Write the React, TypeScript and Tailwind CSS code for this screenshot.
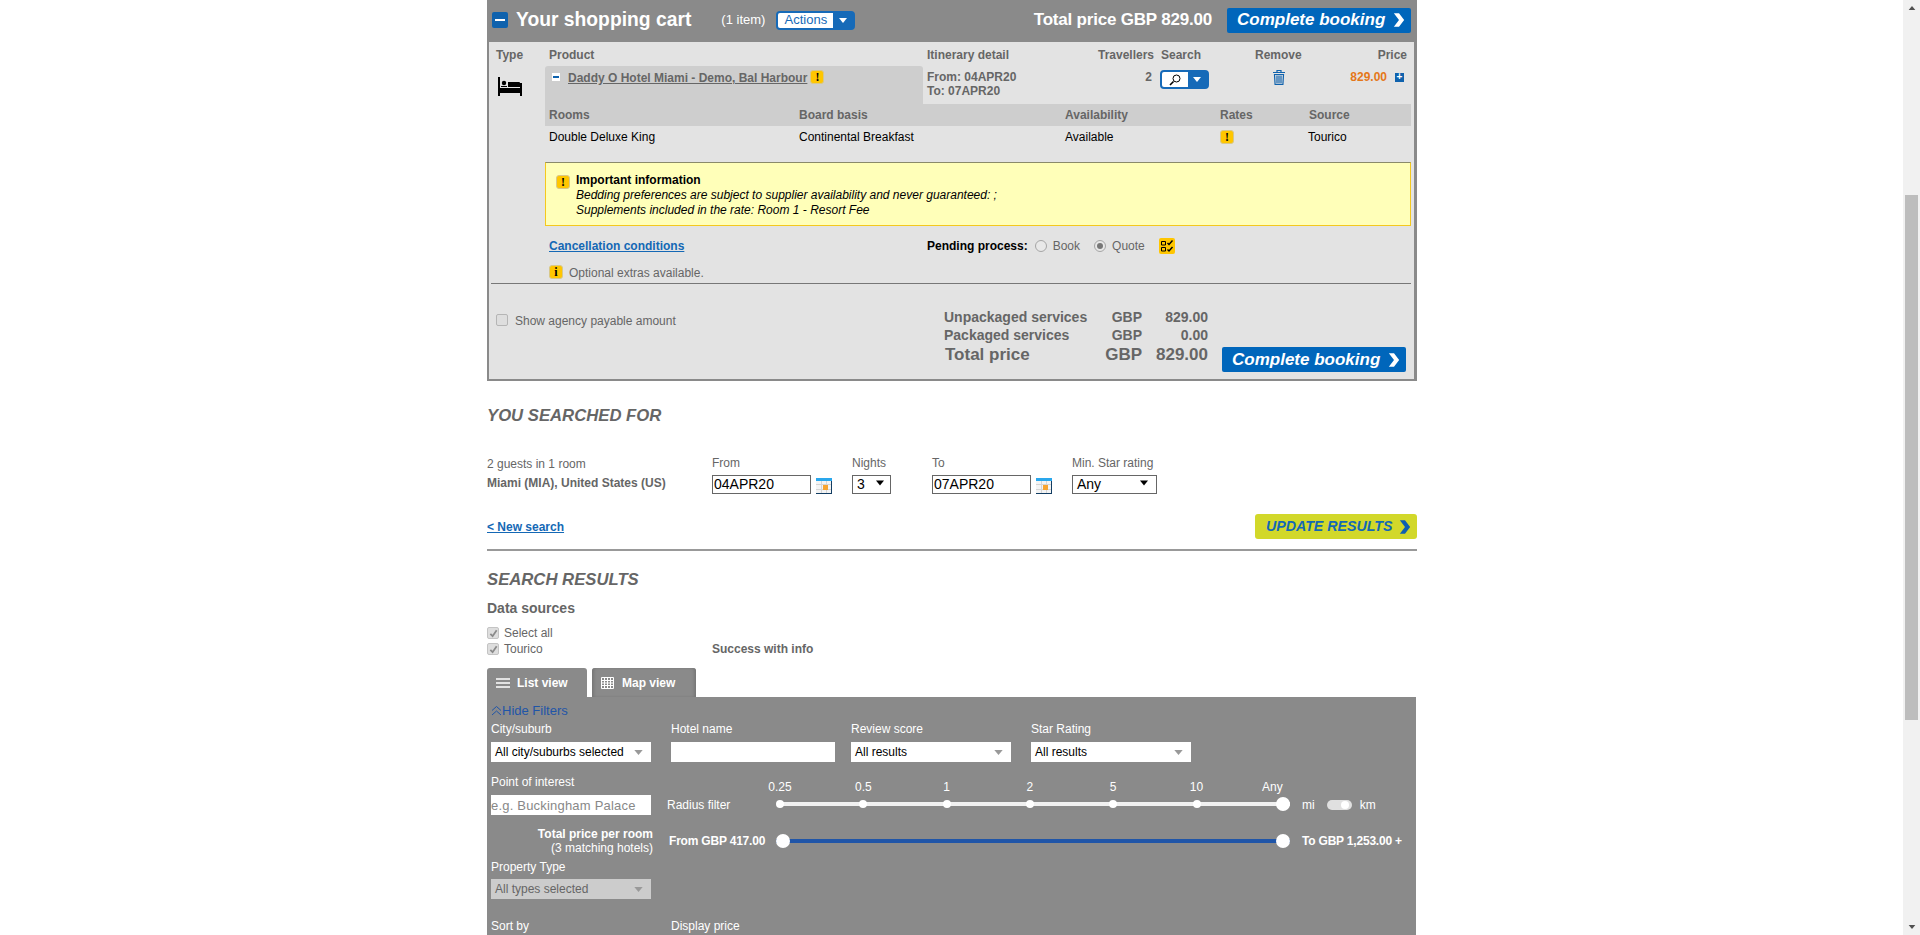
const font = "font-['Liberation_Sans',Arial,sans-serif]";

const Warn = ({ mark = "!" }: { mark?: string }) => (
  <span className="flex h-[14px] w-[14px] shrink-0 items-center justify-center rounded-[3px] border border-[#d8c88a] bg-[#ffc600] font-['Liberation_Serif',serif] text-[12px] font-bold leading-none text-black">
    {mark}
  </span>
);

const Arrow = ({ className }: { className: string }) => (
  <svg viewBox="0 0 14 16" className={className} fill="currentColor">
    <path d="M1 0h6l6 8-6 8H1l6-8z" />
  </svg>
);

const Caret = ({ className }: { className: string }) => (
  <svg viewBox="0 0 10 6" className={className} fill="currentColor">
    <path d="M0 0h10L5 6z" />
  </svg>
);

const CompleteButton = () => (
  <button className="flex h-[25px] w-[184px] items-center justify-between rounded-[2px] bg-[#0066bb] pl-[10px] pr-[6px] text-[17px] font-bold italic text-white">
    Complete booking
    <Arrow className="h-[14px] w-[12px]" />
  </button>
);

const Bed = () => (
  <svg viewBox="0 0 24 19" className="h-[19px] w-[24px]" fill="black">
    <path d="M0 0h2v11h20V6h2v13h-2v-3H2v3H0z" />
    <circle cx="6" cy="6" r="2.2" />
    <path d="M3 9h6v1H3zM10 5h11a1 1 0 0 1 1 1v4H10z" />
  </svg>
);

const Trash = () => (
  <svg viewBox="0 0 12 15" className="h-[15px] w-[12px]" fill="none" stroke="#0f62ad" strokeWidth="1.2">
    <path d="M0 2.5h12M4 2.5V.5h4v2" />
    <path d="M1.5 4.5h9l-.6 10H2.1zM4 5.5v8M6 5.5v8M8 5.5v8" />
  </svg>
);

const Magnifier = () => (
  <svg viewBox="0 0 12 12" className="h-[12px] w-[12px]" fill="none" stroke="black">
    <circle cx="7.5" cy="4.5" r="3.5" />
    <path d="M4.5 7.5L1 11" strokeWidth="1.6" />
  </svg>
);

const ChecklistIcon = () => (
  <svg viewBox="0 0 16 16" className="h-[16px] w-[16px]">
    <rect width="16" height="16" rx="2" fill="#ffc600" />
    <path d="M2.5 3.5h4v3.5h-4zM2.5 9.5h4V13h-4z" fill="none" stroke="black" />
    <path d="M8.5 5l1.5 1.5L13.5 2.5M8.5 11.5L10 13l3.5-4" fill="none" stroke="black" strokeWidth="1.4" />
  </svg>
);

const Calendar = () => (
  <svg viewBox="0 0 16 16" className="h-[16px] w-[16px] shrink-0">
    <rect width="16" height="16" fill="#f4f4f4" />
    <path d="M0 6.5h16M0 11.5h16M5.5 3v13M10.5 3v13" stroke="#d5d5d5" />
    <rect width="16" height="3" fill="#2aa7ec" />
    <rect x="7" y="7" width="5" height="5" fill="#f7a531" />
    <path d="M0 15.5h16M15.5 3v13" stroke="#123d63" />
  </svg>
);

const Check = () => (
  <span className="flex h-[12px] w-[12px] items-center justify-center rounded-[2px] border border-[#c4c4c4] bg-[#dedede]">
    <svg viewBox="0 0 10 10" className="h-[9px] w-[9px]" fill="none" stroke="#8a8a8a" strokeWidth="2">
      <path d="M1.5 5.5l2.5 2.5 4.5-6.5" />
    </svg>
  </span>
);

const Radio = ({ checked = false }: { checked?: boolean }) => (
  <span className="flex h-[12px] w-[12px] items-center justify-center rounded-full border border-[#a5a5a5] bg-[#e8e8e8]">
    {checked && <span className="h-[6px] w-[6px] rounded-full bg-[#777]" />}
  </span>
);

const BoxSelect = ({ value, width, className }: { value: string; width: string; className: string }) => (
  <div className={`flex h-[19px] items-center justify-between border border-[#666] bg-white text-[14px] text-black ${width} ${className}`}>
    {value}
    <Caret className="mb-[3px] h-[6px] w-[8px]" />
  </div>
);

const FilterSelect = ({ value, disabled = false }: { value: string; disabled?: boolean }) => (
  <div className={`flex h-[20px] w-[160px] items-center justify-between pl-[4px] pr-[8px] text-[12px] ${disabled ? "bg-[#cccccc] text-[#666]" : "bg-white text-black"}`}>
    {value}
    <Caret className="h-[5px] w-[9px] text-[#999]" />
  </div>
);

const ShoppingCart = () => (
  <section className="border-b-2 border-l-2 border-r-3 border-[#8a8a8a] bg-[#e3e3e3] text-[12px] text-[#666]">
    <header className="-ml-[2px] -mr-[3px] flex h-[42px] items-center bg-[#8a8a8a] pb-[2px] pl-[5px] pr-[6px] text-white">
      <span className="flex h-[16px] w-[16px] items-center justify-center rounded-[2px] bg-[#0f62ad]">
        <span className="h-[2px] w-[10px] bg-white" />
      </span>
      <h1 className="ml-[8px] text-[19.3px] font-bold">Your shopping cart</h1>
      <span className="ml-[30px] text-[13px]">(1 item)</span>
      <span className="ml-[11px] flex h-[19px] w-[79px] items-center rounded-[4px] border-2 border-[#166ab8] bg-[#166ab8] text-[13px]">
        <span className="flex h-full w-[55px] items-center justify-center rounded-l-[2px] bg-white text-[#166ab8]">Actions</span>
        <Caret className="ml-[6px] h-[5px] w-[8px]" />
      </span>
      <strong className="ml-auto mr-[15px] text-[17px] tracking-[-0.2px]">Total price GBP 829.00</strong>
      <CompleteButton />
    </header>

    <div className="flex">
      <div className="w-[56px] shrink-0 pl-[7px]">
        <div className="flex h-[24px] items-center pt-[2px] font-bold">Type</div>
        <div className="ml-[2px] mt-[11px]"><Bed /></div>
      </div>

      <div className="w-[866px]">
        <div className="flex h-[24px] items-center pt-[2px] font-bold">
          <span className="w-[378px] pl-[4px]">Product</span>
          <span className="w-[175px] pl-[4px]">Itinerary detail</span>
          <span className="w-[56px] pr-[2px] text-right">Travellers</span>
          <span className="w-[90px] pl-[7px]">Search</span>
          <span className="w-[70px] pl-[11px]">Remove</span>
          <span className="w-[97px] pr-[4px] text-right">Price</span>
        </div>

        <div className="flex h-[38px] items-start font-bold">
          <div className="flex h-full w-[378px] items-start rounded-t-[3px] bg-[#cecece] pl-[7px] pt-[3px]">
            <span className="mt-[4px] flex h-[8px] w-[8px] items-center justify-center bg-white">
              <span className="h-[2px] w-[6px] bg-[#0f62ad]" />
            </span>
            <a className="ml-[8px] text-[12px] underline">Daddy O Hotel Miami - Demo, Bal Harbour </a>
            <span className="ml-[3px] mt-px"><Warn /></span>
          </div>
          <div className="w-[175px] pl-[4px] pt-[4px] leading-[14px]">
            <div>From: 04APR20</div>
            <div>To: 07APR20</div>
          </div>
          <div className="w-[56px] pr-[2px] pt-[4px] text-right leading-[14px]">2</div>
          <div className="w-[90px] pl-[6px] pt-[4px]">
            <div className="flex h-[19px] w-[49px] items-center rounded-[4px] border-2 border-[#166ab8] bg-[#166ab8] text-white">
              <span className="flex h-full w-[26px] items-center justify-center rounded-l-[2px] bg-white"><Magnifier /></span>
              <Caret className="ml-[5px] h-[5px] w-[8px]" />
            </div>
          </div>
          <div className="w-[70px] pl-[29px] pt-[4px]"><Trash /></div>
          <div className="flex w-[97px] items-center justify-end pr-[7px] pt-[4px] leading-[14px]">
            <span className="text-[#e57719]">829.00</span>
            <span className="ml-[8px] flex h-[9px] w-[9px] items-center justify-center bg-[#0f62ad] text-[10px] leading-none text-white">+</span>
          </div>
        </div>

        <div className="flex h-[22px] items-center bg-[#cecece] font-bold">
          <span className="w-[250px] pl-[4px]">Rooms</span>
          <span className="w-[266px] pl-[4px]">Board basis</span>
          <span className="w-[155px] pl-[4px]">Availability</span>
          <span className="w-[89px] pl-[4px]">Rates</span>
          <span className="pl-[4px]">Source</span>
        </div>
        <div className="flex h-[22px] items-center text-black">
          <span className="w-[250px] pl-[4px]">Double Deluxe King</span>
          <span className="w-[266px] pl-[4px]">Continental Breakfast</span>
          <span className="w-[155px] pl-[4px]">Available</span>
          <span className="w-[89px] pl-[4px]"><Warn /></span>
          <span className="pl-[3px]">Tourico</span>
        </div>

        <div className="mt-[14px] flex h-[64px] border border-[#f4c81e] border-t-[#8a8a6a] bg-[#ffffb9] pl-[10px] pt-[10px] text-black">
          <div className="mt-[2px]"><Warn /></div>
          <div className="ml-[6px] leading-[15px]">
            <div className="font-bold">Important information</div>
            <div className="italic">Bedding preferences are subject to supplier availability and never guaranteed: ;</div>
            <div className="italic">Supplements included in the rate: Room 1 - Resort Fee</div>
          </div>
        </div>

        <div className="flex h-[39px] items-center">
          <a className="w-[382px] pl-[4px] font-bold text-[#1468b5] underline">Cancellation conditions</a>
          <span className="font-bold text-black">Pending process:</span>
          <span className="ml-[7px] flex items-center gap-[6px]"><Radio />Book</span>
          <span className="ml-[14px] flex items-center gap-[6px]"><Radio checked />Quote</span>
          <span className="ml-[14px]"><ChecklistIcon /></span>
        </div>
        <div className="flex h-[18px] items-start pl-[4px]">
          <Warn mark="i" />
          <span className="ml-[6px] -mt-px">Optional extras available.</span>
        </div>
      </div>
    </div>

    <div className="ml-[2px] mr-[3px] h-px bg-[#777]" />

    <div className="flex h-[95px]">
      <label className="flex w-[455px] items-start gap-[7px] pl-[7px] pt-[30px]">
        <span className="h-[12px] w-[12px] rounded-[2px] border border-[#b5b5b5] bg-[#dedede]" />
        <span className="-mt-[2px]">Show agency payable amount</span>
      </label>
      <div className="w-[265px] pt-[24px] font-bold">
        <div className="flex h-[18px] items-center text-[14px]">
          <span className="w-[160px]">Unpackaged services</span>
          <span className="w-[38px] text-right">GBP</span>
          <span className="w-[66px] text-right">829.00</span>
        </div>
        <div className="flex h-[18px] items-center text-[14px]">
          <span className="w-[160px]">Packaged services</span>
          <span className="w-[38px] text-right">GBP</span>
          <span className="w-[66px] text-right">0.00</span>
        </div>
        <div className="flex h-[21px] items-center text-[17px]">
          <span className="w-[160px] pl-px">Total price</span>
          <span className="w-[38px] text-right">GBP</span>
          <span className="w-[66px] text-right">829.00</span>
        </div>
      </div>
      <div className="pl-[13px] pt-[63px]">
        <CompleteButton />
      </div>
    </div>
  </section>
);

const SearchSummary = () => (
  <section className="text-[12px] text-[#666]">
    <h2 className="mt-px flex h-[68px] items-center text-[16.7px] font-bold italic">YOU SEARCHED FOR</h2>
    <div className="flex h-[47px]">
      <div className="w-[225px] pt-[5px] leading-[19px]">
        <div>2 guests in 1 room</div>
        <div className="font-bold">Miami (MIA), United States (US)</div>
      </div>
      <div className="w-[140px]">
        <div className="h-[19px] pt-[6px] leading-[14px]">From</div>
        <div className="mt-[6px] flex items-start gap-[5px]">
          <input readOnly value="04APR20" className="h-[19px] w-[99px] border border-[#666] bg-white pl-px text-[14px] text-black" />
          <div className="mt-[3px]"><Calendar /></div>
        </div>
      </div>
      <div className="w-[80px]">
        <div className="h-[19px] pt-[6px] leading-[14px]">Nights</div>
        <BoxSelect value="3" width="w-[39px]" className="mt-[6px] pl-[4px] pr-[6px]" />
      </div>
      <div className="w-[140px]">
        <div className="h-[19px] pt-[6px] leading-[14px]">To</div>
        <div className="mt-[6px] flex items-start gap-[5px]">
          <input readOnly value="07APR20" className="h-[19px] w-[99px] border border-[#666] bg-white pl-px text-[14px] text-black" />
          <div className="mt-[3px]"><Calendar /></div>
        </div>
      </div>
      <div>
        <div className="h-[19px] pt-[6px] leading-[14px]">Min. Star rating</div>
        <BoxSelect value="Any" width="w-[85px]" className="mt-[6px] pl-[4px] pr-[8px]" />
      </div>
    </div>

    <div className="mt-[17px] flex h-[25px] items-center justify-between">
      <a className="font-bold text-[#1468b5] underline">&lt; New search</a>
      <button className="flex h-[25px] w-[162px] items-center justify-between rounded-[3px] bg-[#d2d82a] pl-[11px] pr-[6px] text-[14.2px] font-bold italic text-[#1468b5]">
        UPDATE RESULTS
        <Arrow className="h-[14px] w-[12px] text-[#0d5eb0]" />
      </button>
    </div>
    <div className="mt-[10px] h-[2px] bg-[#999]" />

    <h2 className="flex h-[57px] items-center text-[16.7px] font-bold italic">SEARCH RESULTS</h2>
    <h3 className="flex h-0 items-center text-[14px] font-bold">Data sources</h3>
    <div className="mt-[17px] flex h-[16px] items-center gap-[5px]"><Check />Select all</div>
    <div className="flex h-[16px] items-center">
      <span className="flex w-[225px] items-center gap-[5px]"><Check />Tourico</span>
      <span className="font-bold">Success with info</span>
    </div>
  </section>
);

const Tabs = () => (
  <div className="mt-[11px] flex h-[29px] items-end gap-[5px] text-[12px] font-bold text-white">
    <div className="flex h-[29px] w-[100px] items-center rounded-t-[3px] bg-[#8a8a8a] pl-[9px]">
      <svg viewBox="0 0 14 10" className="h-[10px] w-[14px]" fill="none" stroke="white" strokeWidth="1.6">
        <path d="M0 1h14M0 5h14M0 9h14" />
      </svg>
      <span className="ml-[7px]">List view</span>
    </div>
    <div className="flex h-[29px] w-[104px] items-center rounded-t-[3px] bg-[#8a8a8a] pl-[9px] shadow-[inset_3px_0_3px_-1px_#777,inset_-3px_0_3px_-1px_#777]">
      <svg viewBox="0 0 13 12" className="h-[12px] w-[13px]" fill="none" stroke="white">
        <path d="M.5.5h12v11H.5zM.5 3.5h12M.5 6h12M.5 8.5h12M3.5.5v11M6.5.5v11M9.5.5v11" />
      </svg>
      <span className="ml-[8px]">Map view</span>
    </div>
  </div>
);

const Filters = () => {
  const radius = ["0.25", "0.5", "1", "2", "5", "10"];
  return (
    <section className="h-[238px] w-[929px] bg-[#8a8a8a] text-[12px] text-white">
      <a className="ml-[4px] flex h-[26px] items-center pt-[1px] text-[13px] text-[#1f55a8]">
        <svg viewBox="0 0 11 10" className="h-[10px] w-[11px]" fill="none" stroke="currentColor">
          <path d="M1 4.5l4.5-4 4.5 4M1 9l4.5-4 4.5 4" />
        </svg>
        Hide Filters
      </a>

      <div className="ml-[4px] flex">
        <div className="w-[180px]">
          <div className="h-[19px] leading-[13px]">City/suburb</div>
          <FilterSelect value="All city/suburbs selected" />
        </div>
        <div className="w-[180px]">
          <div className="h-[19px] leading-[13px]">Hotel name</div>
          <input readOnly className="h-[20px] w-[164px] bg-white" />
        </div>
        <div className="w-[180px]">
          <div className="h-[19px] leading-[13px]">Review score</div>
          <FilterSelect value="All results" />
        </div>
        <div>
          <div className="h-[19px] leading-[13px]">Star Rating</div>
          <FilterSelect value="All results" />
        </div>
      </div>

      <div className="ml-[4px] mt-[14px] flex h-[39px]">
        <div className="w-[160px]">
          <div className="h-[19px] leading-[13px]">Point of interest</div>
          <input
            readOnly
            placeholder="e.g. Buckingham Palace"
            className="h-[20px] w-[160px] bg-white text-[13px] tracking-[0.2px] placeholder:text-[#888]"
          />
        </div>
        <span className="ml-[16px] mt-[22px] w-[97px] leading-[14px]">Radius filter</span>
        <div className="relative h-[39px] w-[538px] shrink-0">
          <div className="absolute left-[16px] top-[26px] h-[4px] w-[510px] bg-[#f1f1f1]" />
          {radius.map((label, i) => (
            <div key={label} className="absolute top-[5px] flex w-[40px] flex-col items-center" style={{ left: `${i * 83.3 - 4}px` }}>
              <span className="h-[19px] leading-[12px]">{label}</span>
              <span className="h-[8px] w-[8px] rounded-full bg-white" />
            </div>
          ))}
          <span className="absolute left-[498px] top-[5px] leading-[12px]">Any</span>
          <span className="absolute left-[512px] top-[21px] h-[14px] w-[14px] rounded-full bg-white" />
        </div>
        <span className="mt-[22px] flex h-[14px] items-center">
          mi
          <span className="ml-[12px] flex h-[10px] w-[25px] items-center justify-end rounded-full bg-[#e0e0e0] pr-[3px]">
            <span className="h-[8px] w-[8px] rounded-full bg-white" />
          </span>
          <span className="ml-[8px]">km</span>
        </span>
      </div>

      <div className="mt-[11px] flex h-[29px] items-center">
        <div className="w-[166px] text-right leading-[14px]">
          <div className="font-bold">Total price per room</div>
          <div>(3 matching hotels)</div>
        </div>
        <span className="ml-[16px] w-[107px] whitespace-nowrap font-bold tracking-[-0.2px]">From GBP 417.00</span>
        <div className="relative flex h-[14px] w-[514px] items-center">
          <div className="h-[4px] w-full bg-[#1f55a8]" />
          <span className="absolute left-0 h-[14px] w-[14px] rounded-full bg-white" />
          <span className="absolute right-0 h-[14px] w-[14px] rounded-full bg-white" />
        </div>
        <span className="ml-[12px] font-bold tracking-[-0.2px]">To GBP 1,253.00 +</span>
      </div>

      <div className="ml-[4px] mt-[6px]">
        <div className="h-[18px] leading-[12px]">Property Type</div>
        <FilterSelect value="All types selected" disabled />
      </div>

      <div className="ml-[4px] mt-[21px] flex leading-[12px]">
        <span className="w-[180px]">Sort by</span>
        <span>Display price</span>
      </div>
    </section>
  );
};

const Scrollbar = () => (
  <div className="flex h-[935px] w-[17px] shrink-0 flex-col items-center justify-between bg-[#f1f1f1] py-[6px] text-[#505050]">
    <Caret className="h-[4px] w-[8px] rotate-180" />
    <div className="absolute right-[2px] top-[195px] h-[525px] w-[13px] bg-[#bdbdbd]" />
    <Caret className="h-[4px] w-[8px]" />
  </div>
);

export default function App() {
  return (
    <div className={`relative flex h-[935px] w-[1920px] overflow-hidden bg-white ${font}`}>
      <main className="w-[1903px] pl-[487px]">
        <div className="w-[930px]">
          <ShoppingCart />
          <SearchSummary />
          <Tabs />
          <Filters />
        </div>
      </main>
      <Scrollbar />
    </div>
  );
}
